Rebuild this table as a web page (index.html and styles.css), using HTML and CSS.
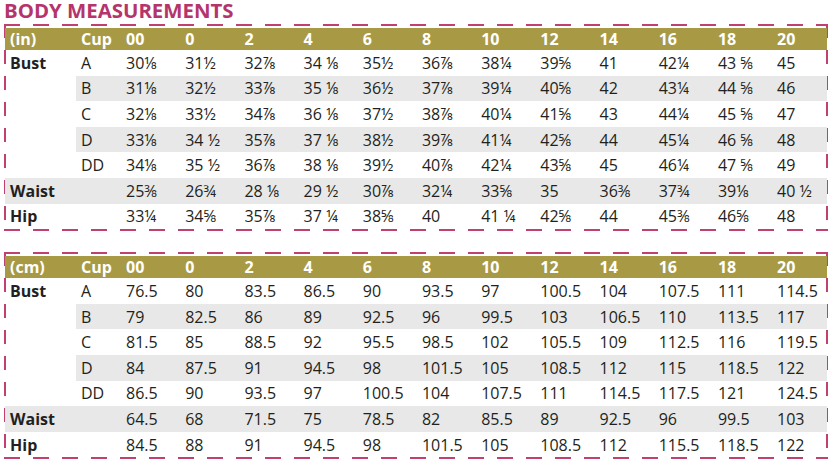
FILE: index.html
```html
<!DOCTYPE html>
<html lang="en">
<head>
<meta charset="utf-8">
<title>Body Measurements</title>
<link rel="stylesheet" href="styles.css">
</head>
<body>
<h1 class="title">BODY MEASUREMENTS</h1>

<div class="box">
<table class="chart">
<colgroup><col class="c-label"><col class="c-cup"><col class="c-num" span="11"><col></colgroup>
<thead>
<tr><th>(in)</th><th>Cup</th><th>00</th><th>0</th><th>2</th><th>4</th><th>6</th><th>8</th><th>10</th><th>12</th><th>14</th><th>16</th><th>18</th><th>20</th></tr>
</thead>
<tbody>
<tr><th>Bust</th><td>A</td><td>30⅛</td><td>31½</td><td>32⅞</td><td>34 ⅛</td><td>35½</td><td>36⅞</td><td>38¼</td><td>39⅝</td><td>41</td><td>42¼</td><td>43 ⅝</td><td>45</td></tr>
<tr class="band"><th></th><td>B</td><td>31⅛</td><td>32½</td><td>33⅞</td><td>35 ⅛</td><td>36½</td><td>37⅞</td><td>39¼</td><td>40⅝</td><td>42</td><td>43¼</td><td>44 ⅝</td><td>46</td></tr>
<tr><th></th><td>C</td><td>32⅛</td><td>33½</td><td>34⅞</td><td>36 ⅛</td><td>37½</td><td>38⅞</td><td>40¼</td><td>41⅝</td><td>43</td><td>44¼</td><td>45 ⅝</td><td>47</td></tr>
<tr class="band"><th></th><td>D</td><td>33⅛</td><td>34 ½</td><td>35⅞</td><td>37 ⅛</td><td>38½</td><td>39⅞</td><td>41¼</td><td>42⅝</td><td>44</td><td>45¼</td><td>46 ⅝</td><td>48</td></tr>
<tr><th></th><td>DD</td><td>34⅛</td><td>35 ½</td><td>36⅞</td><td>38 ⅛</td><td>39½</td><td>40⅞</td><td>42¼</td><td>43⅝</td><td>45</td><td>46¼</td><td>47 ⅝</td><td>49</td></tr>
<tr class="band full"><th>Waist</th><td></td><td>25⅜</td><td>26¾</td><td>28 ⅛</td><td>29 ½</td><td>30⅞</td><td>32¼</td><td>33⅝</td><td>35</td><td>36⅜</td><td>37¾</td><td>39⅛</td><td>40 ½</td></tr>
<tr><th>Hip</th><td></td><td>33¼</td><td>34⅝</td><td>35⅞</td><td>37 ¼</td><td>38⅝</td><td>40</td><td>41 ¼</td><td>42⅝</td><td>44</td><td>45⅜</td><td>46⅝</td><td>48</td></tr>
</tbody>
</table>
</div>

<div class="box box-second">
<table class="chart">
<colgroup><col class="c-label"><col class="c-cup"><col class="c-num" span="11"><col></colgroup>
<thead>
<tr><th>(cm)</th><th>Cup</th><th>00</th><th>0</th><th>2</th><th>4</th><th>6</th><th>8</th><th>10</th><th>12</th><th>14</th><th>16</th><th>18</th><th>20</th></tr>
</thead>
<tbody>
<tr><th>Bust</th><td>A</td><td>76.5</td><td>80</td><td>83.5</td><td>86.5</td><td>90</td><td>93.5</td><td>97</td><td>100.5</td><td>104</td><td>107.5</td><td>111</td><td>114.5</td></tr>
<tr class="band"><th></th><td>B</td><td>79</td><td>82.5</td><td>86</td><td>89</td><td>92.5</td><td>96</td><td>99.5</td><td>103</td><td>106.5</td><td>110</td><td>113.5</td><td>117</td></tr>
<tr><th></th><td>C</td><td>81.5</td><td>85</td><td>88.5</td><td>92</td><td>95.5</td><td>98.5</td><td>102</td><td>105.5</td><td>109</td><td>112.5</td><td>116</td><td>119.5</td></tr>
<tr class="band"><th></th><td>D</td><td>84</td><td>87.5</td><td>91</td><td>94.5</td><td>98</td><td>101.5</td><td>105</td><td>108.5</td><td>112</td><td>115</td><td>118.5</td><td>122</td></tr>
<tr><th></th><td>DD</td><td>86.5</td><td>90</td><td>93.5</td><td>97</td><td>100.5</td><td>104</td><td>107.5</td><td>111</td><td>114.5</td><td>117.5</td><td>121</td><td>124.5</td></tr>
<tr class="band full"><th>Waist</th><td></td><td>64.5</td><td>68</td><td>71.5</td><td>75</td><td>78.5</td><td>82</td><td>85.5</td><td>89</td><td>92.5</td><td>96</td><td>99.5</td><td>103</td></tr>
<tr><th>Hip</th><td></td><td>84.5</td><td>88</td><td>91</td><td>94.5</td><td>98</td><td>101.5</td><td>105</td><td>108.5</td><td>112</td><td>115.5</td><td>118.5</td><td>122</td></tr>
</tbody>
</table>
</div>
</body>
</html>
```

FILE: styles.css
```css
body {
  margin: 0;
  font-family: "Open Sans", "Noto Sans", "DejaVu Sans", sans-serif;
  color: #231f20;
  background: #fff;
}

.title {
  margin: 0;
  height: 24px;
  padding-left: 4px;
  font-size: 20.4px;
  line-height: 21px;
  font-weight: 700;
  color: #b5346b;
}

.box {
  margin-left: 4px;
  width: 824px;
  box-sizing: border-box;
  padding: 4px 1px 2px 1px;
  background:
    repeating-linear-gradient(90deg, #c0406f 0 16px, transparent 16px 29px) left top / 100% 2px no-repeat,
    repeating-linear-gradient(90deg, #c0406f 0 16px, transparent 16px 29px) left bottom / 100% 2px no-repeat,
    repeating-linear-gradient(180deg, #c0406f 0 14px, transparent 14px 26px) left top / 2px 100% no-repeat,
    repeating-linear-gradient(180deg, #c0406f 0 14px, transparent 14px 26px) right top / 2px 100% no-repeat;
}

.box-second {
  margin-top: 21px;
}

.chart {
  width: 100%;
  border-collapse: collapse;
  table-layout: fixed;
}

.c-label { width: 71px; }
.c-cup { width: 46px; }
.c-num { width: 59.2px; }

.chart th,
.chart td {
  padding: 0 0 0 4px;
  text-align: left;
  white-space: nowrap;
  font-size: 16px;
  height: 25.6px;
  line-height: 20px;
}

.chart tbody th {
  padding-left: 5px;
  font-weight: 700;
}

.chart tbody td:nth-child(2) {
  padding-left: 5px;
}

.chart thead th {
  height: 22px;
  background: #a89a45;
  color: #fff;
  font-weight: 700;
}

.chart thead th:first-child {
  padding-left: 5px;
}

.chart thead th:nth-child(2) {
  padding-left: 5px;
}

.band td {
  background: #e8e8e8;
}

.band.full th {
  background: #e8e8e8;
}
```
